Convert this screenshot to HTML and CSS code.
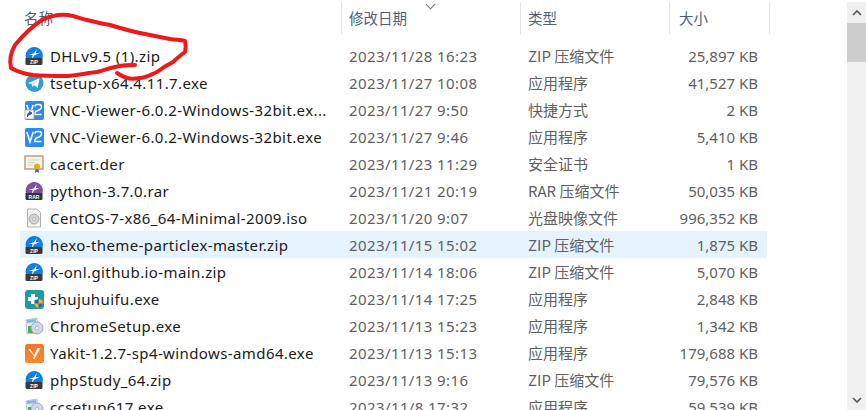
FILE: index.html
```html
<!DOCTYPE html>
<html lang="zh-CN">
<head>
    <meta charset="UTF-8">
    <title>Downloads</title>
    <link rel="stylesheet" href="styles.css">
</head>
<body>
    <svg class="defs" width="0" height="0">
        <defs>
            <symbol id="i-zip" viewBox="0 0 20 20">
                <path d="M2 12 A8.6 8.6 0 1 1 18.500 12 Z" fill="#0f7fe6"/>
                <path d="M4.500 9 L10 7.200 L12.800 3 L11.800 7.200 L16 6.800 L10.200 9.600 L8 13 L8.500 9 Z" fill="#fff"/>
                <path d="M1.500 12 H18.500 V17.500 Q18.500 19 17 19 H3 Q1.500 19 1.500 17.500 Z" fill="#3a3a3a"/>
                <text x="10" y="17.600" class="badge-text">ZIP</text>
            </symbol>
            <symbol id="i-rar" viewBox="0 0 20 20">
                <path d="M2 12 A8.600 8.600 0 1 1 18.500 12 Z" fill="#7d4fa6"/>
                <path d="M4.500 9 L10 7.200 L12.800 3 L11.800 7.200 L16 6.800 L10.200 9.600 L8 13 L8.500 9 Z" fill="#fff"/>
                <path d="M1.500 12 H18.500 V17.500 Q18.500 19 17 19 H3 Q1.500 19 1.500 17.500 Z" fill="#333"/>
                <text x="10" y="17.600" class="badge-text">RAR</text>
            </symbol>
            <symbol id="i-telegram" viewBox="0 0 20 20">
                <circle cx="10.500" cy="10" r="9" fill="#2f9fd8"/>
                <path d="M4 10 L15.500 5.300 L13.800 14.800 L10 12.300 L8.300 14 L8 11.400 Z" fill="#fff"/>
                <path d="M8 11.400 L13.300 7.200 L9.500 11.900 Z" fill="#b9dcef"/>
            </symbol>
            <symbol id="i-vnc" viewBox="0 0 20 20">
                <rect x="1" y="1" width="19" height="19" rx="2" fill="#2a8cf0"/>
                <path d="M2.800 5 L6 15 L9.200 5" fill="none" stroke="#fff" stroke-width="1.600"/>
                <path d="M11 6.500 Q11 4.500 13.500 4.500 H15 Q17.500 4.500 17.500 6.800 Q17.500 9 15 10 L11.500 11.500 Q10.800 12 10.800 14.500 H17.500" fill="none" stroke="#fff" stroke-width="1.500"/>
            </symbol>
            <symbol id="i-shortcut" viewBox="0 0 20 20">
                <use href="#i-vnc"/>
                <rect x="1" y="10" width="9" height="9" fill="#fff" stroke="#999" stroke-width=".8"/>
                <path d="M3.500 17 V14.500 Q3.500 13 5.500 13 H6.500 M5.500 11.500 L8 13 L5.500 15 Z" fill="#1c5fb5" stroke="#1c5fb5"/>
            </symbol>
            <symbol id="i-cert" viewBox="0 0 20 20">
                <rect x="1" y="2" width="18" height="13" fill="#f7f3ea" stroke="#b29a80" stroke-width="1.400"/>
                <path d="M4 6 H15 M4 8.500 H11 M4 11 H9" stroke="#d8d4cc"/>
                <path d="M11.500 15 L11 19 L13 17.800 L15 19 L14.500 15" fill="#2a68c8"/>
                <circle cx="13" cy="12.500" r="3" fill="#eaa928"/>
            </symbol>
            <symbol id="i-iso" viewBox="0 0 20 20">
                <path d="M3.500 1 H13 L16.500 4.500 V19 H3.500 Z" fill="#f6f6f6" stroke="#b0b0b0"/>
                <circle cx="10" cy="11" r="5" fill="#d4d4d4" stroke="#a8a8a8"/>
                <circle cx="10" cy="11" r="1.600" fill="#f4f4f4" stroke="#999" stroke-width=".6"/>
            </symbol>
            <symbol id="i-shuju" viewBox="0 0 20 20">
                <rect x="1" y="1" width="19" height="19" rx="3" fill="#1f9ca3"/>
                <path d="M7 5 H11 V8 H14 V12 H11 V15 H7 V12 H4 V8 H7 Z" fill="#fff"/>
                <path d="M14.500 10 L18.500 11.200 V14.500 Q18.500 17.500 14.500 19 Q10.500 17.500 10.500 14.500 V11.200 Z" fill="#f2b330"/>
                <path d="M14.500 10 V14.500 H10.500 Q10.500 11.500 10.500 11.200 Z M14.500 14.500 H18.500 Q18.500 17.500 14.500 19 Z" fill="#2b62b8"/>
            </symbol>
            <symbol id="i-setup" viewBox="0 0 20 20">
                <path d="M2 4 L13 2 L14 17 L3 18 Z" fill="#dfe9f2" stroke="#a9bccb" stroke-width=".8"/>
                <path d="M3 4 L12 3 V6 L3 7 Z" fill="#86b7e2"/>
                <rect x="4" y="10" width="3" height="7" fill="#4bae4f"/>
                <rect x="7" y="11" width="2" height="6" fill="#e0663a"/>
                <circle cx="13" cy="12" r="6" fill="#cfd8ea" stroke="#8d9cba" stroke-width=".8"/>
                <circle cx="13" cy="12" r="1.600" fill="#fff" stroke="#8d9cba" stroke-width=".6"/>
            </symbol>
            <symbol id="i-yakit" viewBox="0 0 20 20">
                <defs>
                    <linearGradient id="yakit-fill" x1="0" y1="0" x2="0" y2="1">
                        <stop offset="0" stop-color="#f5742a"/>
                        <stop offset="1" stop-color="#f98a2f"/>
                    </linearGradient>
                </defs>
                <rect x="1" y="1" width="19" height="19" rx="2.500" fill="url(#yakit-fill)"/>
                <path d="M4 6 H6.500 L10 12 L13.500 5 H16.500 L10.500 16 H9 L10 13 Z" fill="#fff" opacity=".92"/>
                <path d="M7.500 6 L10 10 L12 6" fill="none" stroke="#f5742a"/>
            </symbol>
        </defs>
    </svg>

    <div class="explorer">
        <div class="file-list">
            <div class="header">
                <span class="sort-arrow"></span>
                <div class="head-cell col-name">名称</div>
                <div class="head-cell col-date">修改日期</div>
                <div class="head-cell col-type">类型</div>
                <div class="head-cell col-size">大小</div>
            </div>
            <div class="rows">
                <div class="row">
                    <div class="col-name"><svg class="file-icon"><use href="#i-zip"/></svg>DHLv9.5 (1).zip</div>
                    <div class="col-date">2023/11/28 16:23</div>
                    <div class="col-type">ZIP 压缩文件</div>
                    <div class="col-size">25,897 KB</div>
                </div>
                <div class="row">
                    <div class="col-name"><svg class="file-icon"><use href="#i-telegram"/></svg>tsetup-x64.4.11.7.exe</div>
                    <div class="col-date">2023/11/27 10:08</div>
                    <div class="col-type">应用程序</div>
                    <div class="col-size">41,527 KB</div>
                </div>
                <div class="row">
                    <div class="col-name"><svg class="file-icon"><use href="#i-shortcut"/></svg>VNC-Viewer-6.0.2-Windows-32bit.ex...</div>
                    <div class="col-date">2023/11/27 9:50</div>
                    <div class="col-type">快捷方式</div>
                    <div class="col-size">2 KB</div>
                </div>
                <div class="row">
                    <div class="col-name"><svg class="file-icon"><use href="#i-vnc"/></svg>VNC-Viewer-6.0.2-Windows-32bit.exe</div>
                    <div class="col-date">2023/11/27 9:46</div>
                    <div class="col-type">应用程序</div>
                    <div class="col-size">5,410 KB</div>
                </div>
                <div class="row">
                    <div class="col-name"><svg class="file-icon"><use href="#i-cert"/></svg>cacert.der</div>
                    <div class="col-date">2023/11/23 11:29</div>
                    <div class="col-type">安全证书</div>
                    <div class="col-size">1 KB</div>
                </div>
                <div class="row">
                    <div class="col-name"><svg class="file-icon"><use href="#i-rar"/></svg>python-3.7.0.rar</div>
                    <div class="col-date">2023/11/21 20:19</div>
                    <div class="col-type">RAR 压缩文件</div>
                    <div class="col-size">50,035 KB</div>
                </div>
                <div class="row">
                    <div class="col-name"><svg class="file-icon"><use href="#i-iso"/></svg>CentOS-7-x86_64-Minimal-2009.iso</div>
                    <div class="col-date">2023/11/20 9:07</div>
                    <div class="col-type">光盘映像文件</div>
                    <div class="col-size">996,352 KB</div>
                </div>
                <div class="row selected">
                    <div class="col-name"><svg class="file-icon"><use href="#i-zip"/></svg>hexo-theme-particlex-master.zip</div>
                    <div class="col-date">2023/11/15 15:02</div>
                    <div class="col-type">ZIP 压缩文件</div>
                    <div class="col-size">1,875 KB</div>
                </div>
                <div class="row">
                    <div class="col-name"><svg class="file-icon"><use href="#i-zip"/></svg>k-onl.github.io-main.zip</div>
                    <div class="col-date">2023/11/14 18:06</div>
                    <div class="col-type">ZIP 压缩文件</div>
                    <div class="col-size">5,070 KB</div>
                </div>
                <div class="row">
                    <div class="col-name"><svg class="file-icon"><use href="#i-shuju"/></svg>shujuhuifu.exe</div>
                    <div class="col-date">2023/11/14 17:25</div>
                    <div class="col-type">应用程序</div>
                    <div class="col-size">2,848 KB</div>
                </div>
                <div class="row">
                    <div class="col-name"><svg class="file-icon"><use href="#i-setup"/></svg>ChromeSetup.exe</div>
                    <div class="col-date">2023/11/13 15:23</div>
                    <div class="col-type">应用程序</div>
                    <div class="col-size">1,342 KB</div>
                </div>
                <div class="row">
                    <div class="col-name"><svg class="file-icon"><use href="#i-yakit"/></svg>Yakit-1.2.7-sp4-windows-amd64.exe</div>
                    <div class="col-date">2023/11/13 15:13</div>
                    <div class="col-type">应用程序</div>
                    <div class="col-size">179,688 KB</div>
                </div>
                <div class="row">
                    <div class="col-name"><svg class="file-icon"><use href="#i-zip"/></svg>phpStudy_64.zip</div>
                    <div class="col-date">2023/11/13 9:16</div>
                    <div class="col-type">ZIP 压缩文件</div>
                    <div class="col-size">79,576 KB</div>
                </div>
                <div class="row">
                    <div class="col-name"><svg class="file-icon"><use href="#i-setup"/></svg>ccsetup617.exe</div>
                    <div class="col-date">2023/11/8 17:32</div>
                    <div class="col-type">应用程序</div>
                    <div class="col-size">59,539 KB</div>
                </div>
            </div>
        </div>

        <div class="scrollbar">
            <div class="scroll-btn">
                <svg width="10" height="6" viewBox="0 0 10 6"><path d="M1 5 L5 1 L9 5" class="chevron"/></svg>
            </div>
            <div class="scroll-thumb"></div>
            <div class="scroll-track"></div>
            <div class="scroll-btn">
                <svg width="10" height="6" viewBox="0 0 10 6"><path d="M1 1 L5 5 L9 1" class="chevron"/></svg>
            </div>
        </div>

        <!-- red pen circled over the screenshot -->
        <svg class="scribble" width="866" height="410" viewBox="0 0 866 410">
            <path d="M68 15 C60 14 52 15 42 20 C34 25 25 33 15 45 C11 52 9 60 11 68 C18 72 25 74 33 75 C45 76 55 76 67 76 C78 75 88 73 97 72 C105 70 112 67 120 66 C125 65 130 65 135 65 M68 15 C75 16 82 19 87 20 C95 22 103 24 110 25 C120 28 130 31 140 33 C150 35 160 37 170 39 C177 40 181 40 185 41 C186 45 186 48 185 52 C181 55 177 58 173 62 C167 65 162 68 157 72 C150 75 145 78 140 78 C133 79 130 79 127 78 C124 77 120 75 117 73"/>
        </svg>
    </div>
</body>
</html>
```

FILE: styles.css
```css
html, body {
    margin: 0;
    padding: 0;
    height: 100%;
    overflow: hidden;
    background: white;
}
body {
    font-family: "Noto Sans", "Noto Sans CJK SC", sans-serif;
    font-size: 15px;
    letter-spacing: 0.4px;
}
.defs {
    display: block;
}
.explorer {
    display: flex;
    height: 410px;
    overflow: hidden;
    position: relative;
}
.file-list {
    flex: 1;
    padding: 2px 0 0 20px;
    min-width: 0;
}

.header {
    display: flex;
    height: 32px;
    position: relative;
}
.sort-arrow {
    position: absolute;
    left: 407px;
    top: 0;
    width: 6px;
    height: 6px;
    border-right: 1px solid #777;
    border-bottom: 1px solid #777;
    transform: translateY(-1px) rotate(45deg);
}
.head-cell {
    display: flex;
    align-items: center;
    box-sizing: border-box;
    border-right: 1px solid #e5e5e5;
    padding-bottom: 2px;
}

.col-name {
    width: 322px;
    padding-left: 4px;
    box-sizing: border-box;
    display: flex;
    align-items: center;
    color: #1a1a1a;
    white-space: nowrap;
}
.col-date {
    width: 179px;
    padding-left: 7px;
    box-sizing: border-box;
    color: #5f5f5f;
}
.col-type {
    width: 149px;
    padding-left: 7px;
    box-sizing: border-box;
    color: #5f5f5f;
    font-family: "Noto Sans CJK SC", sans-serif;
    font-size: 15px;
    letter-spacing: 0;
}
.col-size {
    width: 97px;
    padding-right: 9px;
    box-sizing: border-box;
    text-align: right;
    color: #5f5f5f;
    letter-spacing: 0;
}
.head-cell.col-name, .head-cell.col-date, .head-cell.col-type, .head-cell.col-size {
    color: #4c607a;
    font-family: "Noto Sans CJK SC", sans-serif;
    font-size: 14.5px;
    letter-spacing: 0;
    text-align: left;
}
.head-cell.col-size {
    width: 100px;
    padding: 0 0 2px 9px;
}

.rows {
    padding-top: 8px;
}
.row {
    display: flex;
    align-items: center;
    height: 27px;
    width: 747px;
}
.row.selected {
    background: #e5f3ff;
}
.file-icon {
    width: 20px;
    height: 20px;
    margin-right: 6px;
    flex-shrink: 0;
}
.badge-text {
    font-family: "Liberation Sans", sans-serif;
    font-size: 5px;
    font-weight: bold;
    letter-spacing: 0;
    fill: white;
    text-anchor: middle;
}

.scrollbar {
    width: 19px;
    flex-shrink: 0;
    margin-top: 2px;
    display: flex;
    flex-direction: column;
    background: #f0f0f0;
}
.scroll-btn {
    height: 21px;
    display: flex;
    align-items: center;
    justify-content: center;
    flex-shrink: 0;
}
.chevron {
    fill: none;
    stroke: #555;
    stroke-width: 1.6;
}
.scroll-thumb {
    height: 39px;
    background: #cdcdcd;
}
.scroll-track {
    flex: 1;
}

.scribble {
    position: absolute;
    left: 0;
    top: 0;
    pointer-events: none;
}
.scribble path {
    fill: none;
    stroke: #f01818;
    stroke-width: 4;
    stroke-linecap: round;
    stroke-linejoin: round;
}
```
